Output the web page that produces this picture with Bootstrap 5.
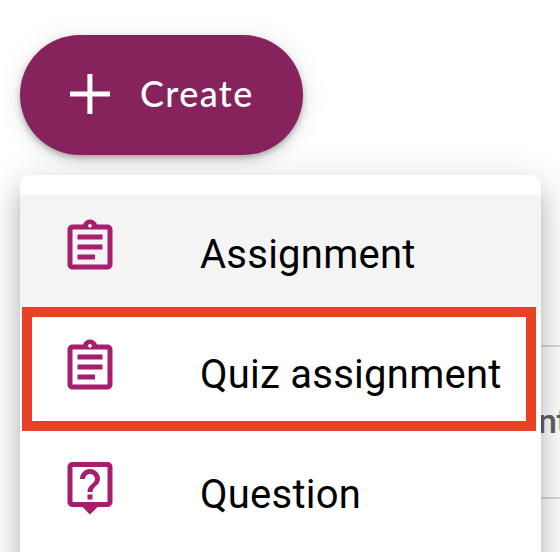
<!DOCTYPE html>
<html lang="en">
<head>
<meta charset="utf-8">
<meta name="viewport" content="width=device-width, initial-scale=1">
<title>Create menu</title>
<link href="https://cdn.jsdelivr.net/npm/bootstrap@5.3.0/dist/css/bootstrap.min.css" rel="stylesheet">
<style>
  body { height: 552px; background: #fff; font-family: Roboto, "Liberation Sans", sans-serif; }
  .stage { height: 552px; padding: 35px 19px 0 20px; }
  .create-btn, .create-btn:hover {
    width: 283px; height: 120px; padding: 0 0 2px 50px; gap: 30px;
    background: #87235c; color: #fff; border: 0;
    font: 500 36px/1 "Google Sans", Lato, sans-serif; letter-spacing: 1.4px;
    box-shadow: 0 2.5px 5px rgba(0,0,0,.2), 0 5px 12px rgba(0,0,0,.14), 0 2px 30px rgba(0,0,0,.08);
  }
  .create-btn span { margin-top: -2px; }
  .create-menu {
    margin-top: 20px; height: 400px; padding-top: 20px; border-radius: 10px 10px 0 0; background: #fff;
    box-shadow: 0 12.5px 12.5px -7.5px rgba(0,0,0,.2), 0 20px 25px 2.5px rgba(0,0,0,.14), 0 7.5px 35px 5px rgba(0,0,0,.12);
  }
  .create-item { height: 120px; padding-left: 40px; color: #000; font-size: 40px; line-height: 1; letter-spacing: .25px; text-decoration: none; }
  .create-item svg { width: 60px; height: 60px; margin: -17px 80px 0 0; fill: #a61e6c; flex: none; }
  .create-item.hovered { background: #f4f4f4; }
  .highlight { left: 2px; top: 132px; width: 514px; height: 124px; border: 10px solid #ea4025; }
  .stream { left: 518px; top: 345px; width: 100px; color: #5f6368; font: 500 34px/149px Roboto, sans-serif; letter-spacing: -.5px; }
  .stream-row { height: 152px; border-top: 2px solid #dadada; padding-left: 20px; }
</style>
</head>
<body class="overflow-hidden">
<main class="stage position-relative overflow-hidden">
  <div class="stream position-absolute">
    <div class="stream-row">nt</div>
    <div class="stream-row"></div>
  </div>
  <button type="button" class="create-btn btn rounded-pill d-flex align-items-center position-relative">
    <svg width="40" height="40" viewBox="0 0 40 40" aria-hidden="true"><path d="M17.4 0h5v17.4H40v5H22.400V40h-5V22.400H0v-5h17.400z" fill="#fff"/></svg>
    <span>Create</span>
  </button>
  <nav class="create-menu position-relative">
    <a href="#" class="create-item hovered d-flex align-items-center">
      <svg viewBox="0 0 24 24" aria-hidden="true"><path d="M7 15h7v2H7zm0-4h10v2H7zm0-4h10v2H7zm12-4h-4.180C14.400 1.840 13.300 1 12 1s-2.400.84-2.820 2H5c-1.100 0-2 .9-2 2v14c0 1.100.9 2 2 2h14c1.100 0 2-.9 2-2V5c0-1.100-.9-2-2-2zm-7-.25c.41 0 .75.34.75.75s-.34.75-.75.75-.75-.34-.75-.75.34-.75.75-.75zM19 19H5V5h14z"/></svg>
      <span>Assignment</span>
    </a>
    <a href="#" class="create-item d-flex align-items-center">
      <svg viewBox="0 0 24 24" aria-hidden="true"><path d="M7 15h7v2H7zm0-4h10v2H7zm0-4h10v2H7zm12-4h-4.180C14.400 1.840 13.300 1 12 1s-2.400.84-2.820 2H5c-1.100 0-2 .9-2 2v14c0 1.100.9 2 2 2h14c1.100 0 2-.9 2-2V5c0-1.100-.9-2-2-2zm-7-.25c.41 0 .75.34.75.75s-.34.75-.75.75-.75-.34-.75-.75.34-.75.75-.75zM19 19H5V5h14z"/></svg>
      <span>Quiz assignment</span>
    </a>
    <a href="#" class="create-item d-flex align-items-center">
      <svg viewBox="0 0 24 24" aria-hidden="true"><path d="M19 2H5c-1.100 0-2 .9-2 2v14c0 1.100.9 2 2 2h4l3 3 3-3h4c1.100 0 2-.9 2-2V4c0-1.100-.9-2-2-2zm0 16H5V4h14zm-8-3h2v2h-2zm1-8.200c1.100 0 2 .9 2 2 0 2-3 2.250-3 5.200h2c0-2.250 3-2.700 3-5.200 0-2.210-1.790-4-4-4s-4 1.790-4 4h2c0-1.100.9-2 2-2z"/></svg>
      <span>Question</span>
    </a>
    <div class="highlight position-absolute"></div>
  </nav>
</main>
<script src="https://cdn.jsdelivr.net/npm/bootstrap@5.3.0/dist/js/bootstrap.bundle.min.js"></script>
</body>
</html>
